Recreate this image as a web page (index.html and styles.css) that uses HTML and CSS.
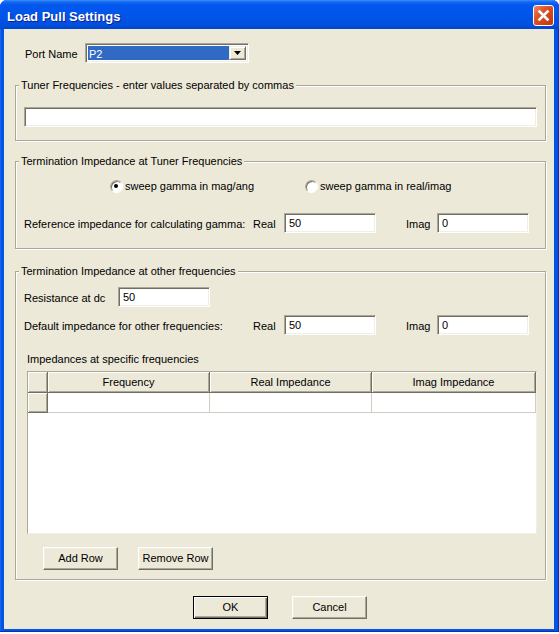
FILE: index.html
```html
<!DOCTYPE html>
<html lang="en">
<head>
    <meta charset="UTF-8">
    <title>Load Pull Settings</title>
    <link rel="stylesheet" href="styles.css">
</head>
<body>
    <div class="window">
        <div class="titlebar">
            <span class="title">Load Pull Settings</span>
            <span class="close">
                <svg width="19" height="19" viewBox="0 0 19 19">
                    <path d="M5.5 5.5 L13.5 13.5 M13.5 5.5 L5.5 13.5" stroke="#fff" stroke-width="2.6" stroke-linecap="square" fill="none"/>
                </svg>
            </span>
        </div>

        <div class="client">
            <div class="port-row">
                <span class="port-label">Port Name</span>
                <div class="combo">
                    <span class="combo-value">P2</span>
                    <span class="combo-btn">
                        <svg width="7" height="4" viewBox="0 0 7 4"><path d="M0 0 H7 L3.5 4 Z" fill="#000"/></svg>
                    </span>
                </div>
            </div>

            <fieldset class="group">
                <legend>Tuner Frequencies - enter values separated by commas</legend>
                <input class="field field-wide" type="text">
            </fieldset>

            <fieldset class="group group-term">
                <legend>Termination Impedance at Tuner Frequencies</legend>
                <div class="radio-row">
                    <label class="radio-item"><span class="radio checked"></span>sweep gamma in mag/ang</label>
                    <label class="radio-item"><span class="radio"></span>sweep gamma in real/imag</label>
                </div>
                <div class="imp-row imp-ref">
                    <span>Reference impedance for calculating gamma:</span>
                    <span>Real</span>
                    <input class="field" type="text" value="50">
                    <span></span>
                    <span>Imag</span>
                    <input class="field" type="text" value="0">
                </div>
            </fieldset>

            <fieldset class="group group-other">
                <legend>Termination Impedance at other frequencies</legend>
                <div class="dc-row">
                    <span class="dc-label">Resistance at dc</span>
                    <input class="field" type="text" value="50">
                </div>
                <div class="imp-row imp-default">
                    <span>Default impedance for other frequencies:</span>
                    <span>Real</span>
                    <input class="field" type="text" value="50">
                    <span></span>
                    <span>Imag</span>
                    <input class="field" type="text" value="0">
                </div>
                <div class="grid-caption">Impedances at specific frequencies</div>
                <div class="grid">
                    <table>
                        <colgroup>
                            <col class="col-head">
                            <col class="col-freq">
                            <col class="col-real">
                            <col class="col-imag">
                        </colgroup>
                        <tr>
                            <th></th>
                            <th>Frequency</th>
                            <th>Real Impedance</th>
                            <th>Imag Impedance</th>
                        </tr>
                        <tr>
                            <td class="rowhead"></td>
                            <td></td>
                            <td></td>
                            <td></td>
                        </tr>
                    </table>
                </div>
                <div class="grid-buttons">
                    <button class="btn">Add Row</button>
                    <button class="btn">Remove Row</button>
                </div>
            </fieldset>

            <div class="dialog-buttons">
                <button class="btn btn-default">OK</button>
                <button class="btn">Cancel</button>
            </div>
        </div>
    </div>
</body>
</html>
```

FILE: styles.css
```css
* { box-sizing: border-box; }
html, body { margin: 0; background: #fff; }
body { font: 11px/13px "Liberation Sans", Arial, sans-serif; color: #000; }

/* window frame */
.window { width: 559px; height: 632px; display: flex; flex-direction: column; background: #0055e5; border-radius: 7px 7px 0 0; box-shadow: inset -1px 0 #0a2fb0, inset 0 -1px #0a2fb0, inset 1px 0 #1b64ea; }
.titlebar { height: 29px; flex: none; display: flex; align-items: flex-start; justify-content: space-between; padding: 0 5px 0 7px; border-radius: 7px 7px 0 0; background: linear-gradient(#3d8ff7 0, #1469f2 2px, #0258ee 5px, #0055e9 50%, #0050de 85%, #0044cf 100%); }
.title { margin-top: 9px; font: bold 13px/16px "Liberation Sans", Arial, sans-serif; color: #fff; text-shadow: 1px 1px 0 #0f1f8c; }
.close { margin-top: 5px; width: 21px; height: 21px; border: 1px solid #fff; border-radius: 3px; background: linear-gradient(135deg, #ec8a6c 0, #e0542a 35%, #cf3f13 75%, #c2380f 100%); display: flex; }
.client { flex: 1; margin: 0 5px 3px 4px; background: #ece9d8; overflow: hidden; }

/* port selector */
.port-row { display: flex; align-items: center; height: 20px; margin-top: 14px; padding-left: 21px; }
.port-label { width: 60px; padding-top: 2px; }
.combo { width: 164px; height: 20px; display: flex; padding: 2px; background: #fff; border: 1px solid; border-color: #aca899 #fff #fff #aca899; box-shadow: inset 1px 1px #716f64, inset -1px -1px #f1efe2; }
.combo-value { flex: 1; background: #316ac5; color: #fff; line-height: 16px; padding-left: 1px; }
.combo-btn { width: 17px; display: flex; align-items: center; justify-content: center; background: #ece9d8; border: 1px solid; border-color: #f1efe2 #716f64 #716f64 #f1efe2; box-shadow: inset 1px 1px #fff, inset -1px -1px #aca899; }

/* group boxes */
.group { margin: 15px 8px 0 11px; padding: 0; min-width: 0; border: 1px solid #aca899; box-shadow: 1px 1px 0 #fff, inset 1px 1px 0 #fff; }
.group legend { margin-left: 3px; padding: 1px 2px 0; line-height: 13px; background: #ece9d8; }
.group-term { margin-top: 13px; }

.field { height: 20px; padding: 0 4px; font: inherit; color: #000; background: #fff; border: 1px solid; border-color: #aca899 #fff #fff #aca899; box-shadow: inset 1px 1px #716f64, inset -1px -1px #f1efe2; outline: none; }
.field-wide { display: block; width: calc(100% - 16px); margin: 15px 8px 13px; }

.radio-row { display: flex; height: 13px; margin-top: 12px; padding-left: 94px; }
.radio-item { display: flex; align-items: center; width: 195px; }
.radio { width: 13px; height: 13px; margin-right: 2px; position: relative; border-radius: 50%; background: #fff; border: 1px solid; border-color: #aca899 #fff #fff #aca899; box-shadow: inset 1px 1px #716f64; }
.radio.checked::after { content: ""; position: absolute; left: 3px; top: 3px; width: 4px; height: 4px; border-radius: 50%; background: #000; }

.imp-row { display: grid; grid-template-columns: 229px 31px 92px 30px 31px 92px; align-items: center; height: 20px; padding-left: 8px; }
.imp-row span, .dc-label { padding-top: 2px; }
.imp-row .field { width: 92px; }
.imp-ref { margin: 20px 0 15px; }
.imp-default { margin-top: 8px; }

.dc-row { display: flex; align-items: center; height: 20px; margin-top: 9px; padding-left: 8px; }
.dc-label { width: 94px; }
.dc-row .field { width: 92px; }

/* grid */
.grid-caption { margin-top: 17px; padding: 1px 0 0 11px; }
.grid { width: 510px; height: 163px; margin: 5px 0 0 11px; background: #fff; border: 1px solid; border-color: #aca899 #f1efe2 #f1efe2 #aca899; }
.grid table { border-collapse: separate; border-spacing: 0; table-layout: fixed; width: 508px; }
.col-head { width: 20px; }
.col-freq { width: 162px; }
.col-real { width: 162px; }
.col-imag { width: 164px; }
.grid th { height: 21px; padding: 1px 0 0; font-weight: normal; text-align: center; background: #ece9d8; border-right: 1px solid #716f64; border-bottom: 1px solid #716f64; box-shadow: inset 1px 1px #fff, inset -1px -1px #aca899; }
.grid td { height: 20px; padding: 0; border-right: 1px solid #cfcdc4; border-bottom: 1px solid #cfcdc4; }
.grid td.rowhead { background: #ece9d8; border-right-color: #716f64; border-bottom-color: #716f64; box-shadow: inset 1px 1px #fff, inset -1px -1px #aca899; }

/* buttons */
.btn { width: 75px; height: 23px; padding: 0; font: inherit; color: #000; background: #ece9d8; border: 1px solid; border-color: #fff #716f64 #716f64 #fff; box-shadow: inset -1px -1px #aca899, inset 1px 1px #f1efe2; }
.btn-default { border-color: #000; box-shadow: inset 1px 1px #fff, inset -1px -1px #716f64, inset -2px -2px #aca899; }
.grid-buttons { display: flex; gap: 20px; margin: 13px 0 9px; padding-left: 27px; }
.dialog-buttons { display: flex; justify-content: center; gap: 24px; margin-top: 16px; padding-left: 2px; }
```
